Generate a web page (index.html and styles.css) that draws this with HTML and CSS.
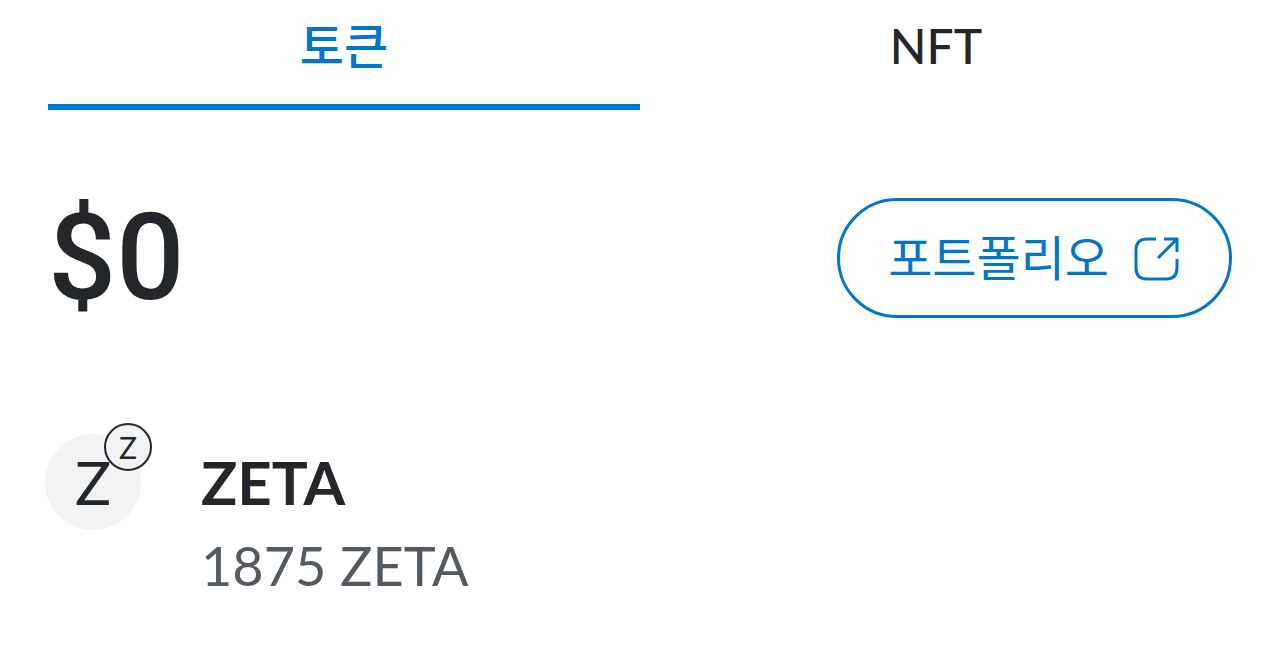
FILE: index.html
```html
<!DOCTYPE html>
<html lang="ko">
<head>
<meta charset="utf-8">
<meta name="viewport" content="width=device-width, initial-scale=1">
<title>토큰</title>
<link rel="stylesheet" href="styles.css">
</head>
<body>
<main class="wallet">
  <div class="tabs" role="tablist">
    <button class="tab tab-active" role="tab" aria-selected="true">토큰</button>
    <button class="tab" role="tab" aria-selected="false">NFT</button>
  </div>
  <section class="balance">
    <h1 class="amount">$0</h1>
    <a class="portfolio" href="#portfolio">
      <span class="portfolio-label">포트폴리오</span>
      <svg class="icon" viewBox="0 0 48 48" aria-hidden="true"><path d="M23 5H14Q3 5 3 16V34Q3 45 14 45H33Q44 45 44 34V25M25 24L44 5M31 5H44V18"/></svg>
    </a>
  </section>
  <section class="token">
    <div class="avatar">Z<span class="badge">Z</span></div>
    <div class="token-info">
      <h2 class="token-name">ZETA</h2>
      <p class="token-amount">1875 ZETA</p>
    </div>
  </section>
</main>
</body>
</html>
```
FILE: styles.css
```css
* { box-sizing: border-box; }
body {
  margin: 0;
  background: #fff;
  color: #24272a;
  font-family: Lato, "Noto Sans CJK KR", sans-serif;
}
.wallet { padding: 0 48px; }
.tabs { display: grid; grid-template-columns: 1fr 1fr; }
.tab {
  height: 110px;
  padding: 0 0 12px;
  border: 0;
  border-bottom: 6px solid transparent;
  background: none;
  color: inherit;
  font-family: inherit;
  font-size: 48px;
  font-weight: 500;
  line-height: 72px;
}
.tab-active { border-color: #0376c9; color: #0376c9; }
.balance {
  display: flex;
  align-items: center;
  justify-content: space-between;
  padding-top: 88px;
}
.amount { margin: 0; font-family: Roboto, sans-serif; font-size: 120px; font-weight: 500; line-height: 120px; }
.portfolio {
  display: flex;
  align-items: center;
  gap: 24px;
  height: 120px;
  padding: 0 48px;
  border: 3px solid #0376c9;
  border-radius: 60px;
  color: #0376c9;
  text-decoration: none;
}
.portfolio-label { font-size: 48px; line-height: 72px; }
.icon { width: 48px; height: 48px; fill: none; stroke: currentColor; stroke-width: 3; }
.token { display: flex; gap: 60px; padding-top: 116px; }
.avatar {
  position: relative;
  width: 96px;
  height: 96px;
  margin-left: -3px;
  border-radius: 50%;
  background: #f2f3f5;
  font-size: 60px;
  line-height: 96px;
  text-align: center;
}
.badge {
  position: absolute;
  top: -11px;
  right: -11px;
  width: 48px;
  height: 48px;
  border: 2px solid #24272a;
  border-radius: 50%;
  background: #f2f3f5;
  font-size: 30px;
  line-height: 44px;
}
.token-info { padding-top: 8px; }
.token-name { margin: 0; font-size: 60px; font-weight: 700; line-height: 80px; }
.token-amount { margin: 4px 0 0; color: #535a61; font-size: 54px; line-height: 80px; }
```
